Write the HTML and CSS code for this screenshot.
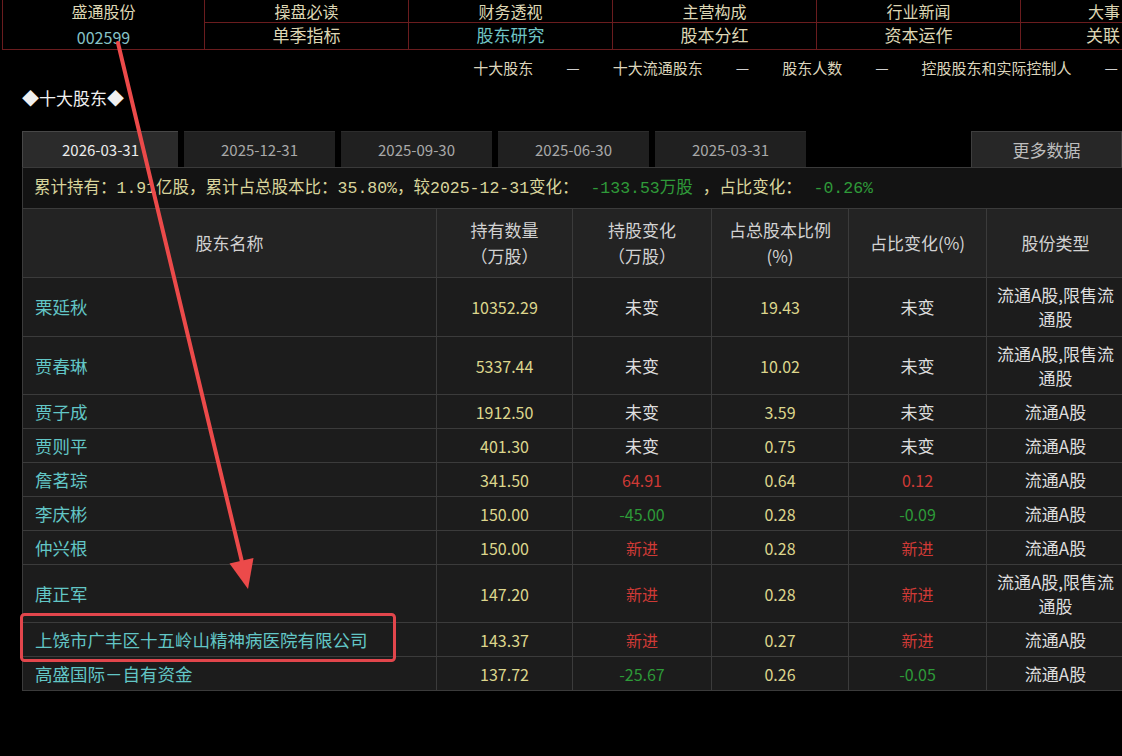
FILE: index.html
```html
<!DOCTYPE html>
<html lang="zh-CN">
<head>
    <meta charset="UTF-8">
    <meta name="viewport" content="width=device-width, initial-scale=1.0">
    <title>盛通股份 - 十大股东</title>
    <link rel="stylesheet" href="styles.css">
</head>
<body>
<div class="page">
    <nav class="stock-nav">
        <div class="stock-name">
            <span class="name">盛通股份</span>
            <span class="code">002599</span>
        </div>
        <a class="top">操盘必读</a>
        <a class="top">财务透视</a>
        <a class="top">主营构成</a>
        <a class="top">行业新闻</a>
        <a class="top last">大事</a>
        <a>单季指标</a>
        <a class="active">股东研究</a>
        <a>股本分红</a>
        <a>资本运作</a>
        <a class="last">关联</a>
    </nav>

    <div class="sub-nav">
        <a>十大股东</a><span class="sep">—</span>
        <a>十大流通股东</a><span class="sep">—</span>
        <a>股东人数</a><span class="sep">—</span>
        <a>控股股东和实际控制人</a><span class="sep">—</span>
    </div>

    <h2 class="section-title">◆十大股东◆</h2>

    <div class="tabs">
        <a class="tab active">2026-03-31</a>
        <a class="tab">2025-12-31</a>
        <a class="tab">2025-09-30</a>
        <a class="tab">2025-06-30</a>
        <a class="tab">2025-03-31</a>
        <a class="tab more">更多数据</a>
    </div>

    <div class="summary">
        累计持有：1.91亿股，累计占总股本比：35.80%，较2025-12-31变化：
        <span class="down">-133.53万股</span> ，占比变化：
        <span class="down">-0.26%</span>
    </div>

    <table class="holders">
        <colgroup>
            <col class="c-name">
            <col class="c-qty">
            <col class="c-chg">
            <col class="c-pct">
            <col class="c-pchg">
            <col class="c-type">
        </colgroup>
        <thead>
            <tr>
                <th>股东名称</th>
                <th>持有数量<br>（万股）</th>
                <th>持股变化<br>（万股）</th>
                <th>占总股本比例<br>(%)</th>
                <th>占比变化(%)</th>
                <th>股份类型</th>
            </tr>
        </thead>
        <tbody>
            <tr class="tall first">
                <td class="name">栗延秋</td>
                <td class="num">10352.29</td>
                <td class="flat">未变</td>
                <td class="num">19.43</td>
                <td class="flat">未变</td>
                <td class="type">流通A股,限售流<br>通股</td>
            </tr>
            <tr class="tall">
                <td class="name">贾春琳</td>
                <td class="num">5337.44</td>
                <td class="flat">未变</td>
                <td class="num">10.02</td>
                <td class="flat">未变</td>
                <td class="type">流通A股,限售流<br>通股</td>
            </tr>
            <tr>
                <td class="name">贾子成</td>
                <td class="num">1912.50</td>
                <td class="flat">未变</td>
                <td class="num">3.59</td>
                <td class="flat">未变</td>
                <td class="type">流通A股</td>
            </tr>
            <tr>
                <td class="name">贾则平</td>
                <td class="num">401.30</td>
                <td class="flat">未变</td>
                <td class="num">0.75</td>
                <td class="flat">未变</td>
                <td class="type">流通A股</td>
            </tr>
            <tr>
                <td class="name">詹茗琮</td>
                <td class="num">341.50</td>
                <td class="up">64.91</td>
                <td class="num">0.64</td>
                <td class="up">0.12</td>
                <td class="type">流通A股</td>
            </tr>
            <tr>
                <td class="name">李庆彬</td>
                <td class="num">150.00</td>
                <td class="down">-45.00</td>
                <td class="num">0.28</td>
                <td class="down">-0.09</td>
                <td class="type">流通A股</td>
            </tr>
            <tr>
                <td class="name">仲兴根</td>
                <td class="num">150.00</td>
                <td class="up">新进</td>
                <td class="num">0.28</td>
                <td class="up">新进</td>
                <td class="type">流通A股</td>
            </tr>
            <tr class="tall">
                <td class="name">唐正军</td>
                <td class="num">147.20</td>
                <td class="up">新进</td>
                <td class="num">0.28</td>
                <td class="up">新进</td>
                <td class="type">流通A股,限售流<br>通股</td>
            </tr>
            <tr>
                <td class="name">上饶市广丰区十五岭山精神病医院有限公司</td>
                <td class="num">143.37</td>
                <td class="up">新进</td>
                <td class="num">0.27</td>
                <td class="up">新进</td>
                <td class="type">流通A股</td>
            </tr>
            <tr>
                <td class="name">高盛国际－自有资金</td>
                <td class="num">137.72</td>
                <td class="down">-25.67</td>
                <td class="num">0.26</td>
                <td class="down">-0.05</td>
                <td class="type">流通A股</td>
            </tr>
        </tbody>
    </table>

    <!-- hand-drawn markup: arrow from the stock code down to the highlighted holder -->
    <svg class="markup" width="1122" height="756" viewBox="0 0 1122 756">
        <line x1="118" y1="43" x2="242" y2="562" stroke="#ec4a4a" stroke-width="4" stroke-linecap="round"/>
        <polygon points="229.5,563.5 253.5,558 248,589" fill="#ec4a4a"/>
        <rect x="21.5" y="614.5" width="373" height="46" rx="3" fill="none" stroke="#e2464c" stroke-width="3"/>
    </svg>
</div>
</body>
</html>
```

FILE: styles.css
```css
body {
    margin: 0;
    padding: 0;
    background-color: #000;
    color: #d8d8d8;
    font-family: "Noto Sans CJK SC", "Noto Sans", sans-serif;
    font-size: 17px;
    overflow: hidden;
}
a {
    text-decoration: none;
    color: inherit;
}
.page {
    position: relative;
    width: 1122px;
    height: 756px;
    overflow: hidden;
}

/* top navigation grid, the last column runs off the right edge */
.stock-nav {
    display: grid;
    grid-template-columns: 203px repeat(4, 204px) 101px;
    grid-template-rows: 23px 27px;
    margin-left: 2px;
}
.stock-nav a,
.stock-name {
    border-right: 1px solid #6a1c1e;
    border-bottom: 1px solid #6a1c1e;
    color: #ddd6b4;
    text-align: center;
    line-height: 24px;
}
.stock-nav a.top,
.stock-name .name {
    font-size: 16px;
    line-height: 23px;
}
.stock-nav a.last {
    border-right: none;
    text-align: right;
    padding-right: 2px;
}
.stock-nav a.active {
    color: #6fc4c4;
}
.stock-name {
    grid-row: 1 / span 2;
    border-left: 1px solid #6a1c1e;
    display: flex;
    flex-direction: column;
}
.stock-name .name {
    height: 23px;
}
.stock-name .code {
    line-height: 28px;
    color: #86c2c6;
    font-size: 16px;
}

.sub-nav {
    display: flex;
    justify-content: flex-end;
    gap: 33px;
    margin-top: 7px;
    padding-right: 4px;
    height: 22px;
    line-height: 22px;
    font-size: 15px;
    color: #ddd6bc;
}
.sub-nav .sep {
    color: #cfcfcf;
}

.section-title {
    margin: 8px 0 0 22px;
    height: 22px;
    line-height: 22px;
    font-size: 17px;
    font-weight: normal;
    color: #f0f0f0;
}

/* report date tabs */
.tabs {
    display: flex;
    gap: 6px;
    margin: 22px 0 0 22px;
    height: 36px;
}
.tab {
    width: 151px;
    background-color: #202020;
    border-top: 1px solid #2c2c2c;
    color: #a9a9a9;
    text-align: center;
    line-height: 36px;
    font-size: 15px;
}
.tab.active {
    width: 155px;
    background-color: #2b2b2b;
    border-top: 1px solid #474747;
    border-left: 1px solid #474747;
    color: #ececec;
}
.tab.more {
    margin-left: auto;
    width: 149px;
    background-color: #272727;
    border: 1px solid #3e3e3e;
    border-bottom: none;
    color: #bdbdbd;
    font-size: 17px;
}

.summary {
    margin-left: 22px;
    height: 41px;
    line-height: 41px;
    padding-left: 11px;
    background-color: #131313;
    border-top: 1px solid #3a3a3a;
    border-left: 1px solid #3a3a3a;
    box-sizing: border-box;
    color: #d9d59c;
    font-family: "Liberation Mono", "Noto Sans CJK SC", monospace;
    font-size: 16.5px;
    white-space: nowrap;
}
.summary .down {
    color: #2f9a39;
    margin-left: 2px;
}

/* holders table */
.holders {
    margin-left: 22px;
    border-collapse: collapse;
    table-layout: fixed;
    width: 1102px;
    background-color: #1c1c1c;
}
.c-name { width: 414px; }
.c-qty { width: 136px; }
.c-chg { width: 139px; }
.c-pct { width: 137px; }
.c-pchg { width: 138px; }
.c-type { width: 138px; }
.holders th,
.holders td {
    border: 1px solid #3b3b3b;
    padding: 0;
    text-align: center;
    font-weight: normal;
    white-space: nowrap;
}
.holders thead tr {
    height: 69px;
}
.holders th {
    background-color: #232323;
    color: #d2d2d2;
    line-height: 26px;
}
.holders tbody tr {
    height: 34px;
    line-height: 22px;
}
.holders tbody tr.tall {
    height: 58px;
}
.holders tbody tr.first {
    height: 59px;
}
.holders td.name {
    text-align: left;
    padding-left: 12px;
    color: #62c6c6;
    font-size: 17.5px;
}
.holders td.num {
    color: #dcd68c;
    font-size: 16px;
}
.holders td.flat,
.holders td.type {
    color: #dedede;
}
.holders td.type {
    line-height: 24px;
}
.holders td.up {
    color: #cf3a36;
    font-size: 16px;
}
.holders td.down {
    color: #2d9a38;
    font-size: 16px;
}

/* annotation layer on top of the page */
.markup {
    position: absolute;
    left: 0;
    top: 0;
    pointer-events: none;
}
```
